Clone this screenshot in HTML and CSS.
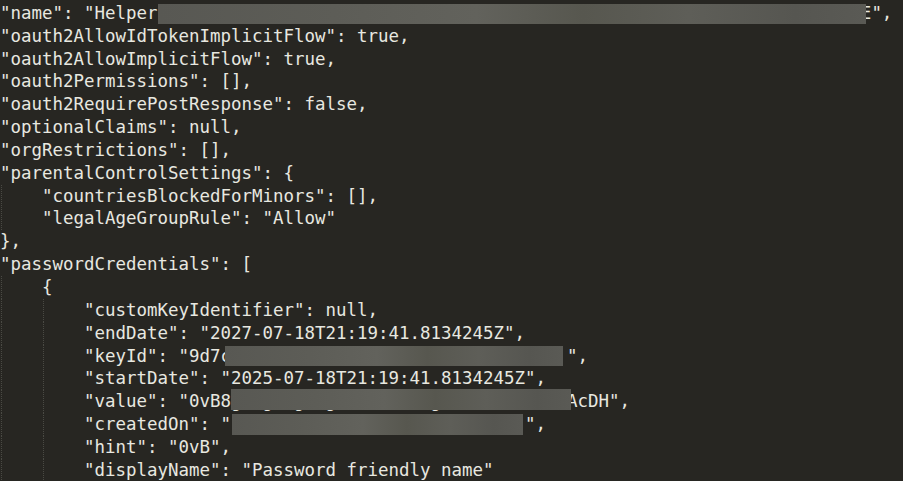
FILE: index.html
```html
<!DOCTYPE html>
<html lang="en">
<head>
<meta charset="utf-8">
<title>JSON</title>
<link rel="stylesheet" href="styles.css">
</head>
<body>
<div class="editor">
<div class="ln">"name": "Helper<span class="redact r-name">aaaaaaaaaaaaaaaaaaaaaaaaaaaaaaaaaaaaaaaaaaaaaaaaaaaaaaaaaaaaaaaaaaaE</span>",</div>
<div class="ln">"oauth2AllowIdTokenImplicitFlow": true,</div>
<div class="ln">"oauth2AllowImplicitFlow": true,</div>
<div class="ln">"oauth2Permissions": [],</div>
<div class="ln">"oauth2RequirePostResponse": false,</div>
<div class="ln">"optionalClaims": null,</div>
<div class="ln">"orgRestrictions": [],</div>
<div class="ln">"parentalControlSettings": {</div>
<div class="ln g1">    "countriesBlockedForMinors": [],</div>
<div class="ln g1">    "legalAgeGroupRule": "Allow"</div>
<div class="ln">},</div>
<div class="ln">"passwordCredentials": [</div>
<div class="ln g1">    {</div>
<div class="ln g2">        "customKeyIdentifier": null,</div>
<div class="ln g2">        "endDate": "2027-07-18T21:19:41.8134245Z",</div>
<div class="ln g2">        "keyId": "9d7<span class="redact r-key">caaaaaaaaaaaaaaaaaaaaaaaaaaaaaaa </span>",</div>
<div class="ln g2">        "startDate": "2025-07-18T21:19:41.8134245Z",</div>
<div class="ln g2">        "value": "0vB8<span class="redact r-value">gaagaagaagaaaaaaaaagaaaaaaaaaaaa</span>AcDH",</div>
<div class="ln g2">        "createdOn": "<span class="redact r-created">1aaaaaaaaaaaaaaaaaaaaaaaaaa </span>",</div>
<div class="ln g2">        "hint": "0vB",</div>
<div class="ln g2">        "displayName": "Password friendly name"</div>
</div>
</body>
</html>
```
FILE: styles.css
```css
html, body {
  margin: 0;
  padding: 0;
  background: #272622;
  overflow: hidden;
}

.editor {
  padding-top: 1.85px;
  font-family: "DejaVu Sans Mono", "Liberation Mono", monospace;
  font-size: 17.44px;
  line-height: 22.85px;
  color: #e8e8e0;
}

.ln {
  height: 22.85px;
  white-space: pre;
}

.g1 {
  background-image: linear-gradient(to bottom, #4a4a44 50%, transparent 50%);
  background-size: 1px 2px;
  background-repeat: repeat-y;
  background-position: 1px 0;
}

.g2 {
  background-image:
    linear-gradient(to bottom, #4a4a44 50%, transparent 50%),
    linear-gradient(to bottom, #4a4a44 50%, transparent 50%);
  background-size: 1px 2px, 1px 2px;
  background-repeat: repeat-y, repeat-y;
  background-position: 1px 0, 43px 0;
}

.redact {
  position: relative;
}

.redact::after {
  content: "";
  position: absolute;
  top: 0;
  height: 20.6px;
  left: 0;
  right: 0;
  background: linear-gradient(90deg, #585853 0%, #5d5d57 25%, #62625c 45%, #57574f 60%, #5e5e58 75%, #565651 90%, #5a5a55 100%);
}

.r-name::after {
  top: 0.9px;
  height: 20px;
  left: 0.5px;
  right: 5.5px;
}

.r-key::after {
  left: 4.5px;
  right: 3.7px;
}

.r-value::after {
  top: -2.3px;
  height: 20.7px;
  left: 0;
  right: -3.7px;
}

.r-created::after {
  left: 1.5px;
  right: 1.7px;
}
```
